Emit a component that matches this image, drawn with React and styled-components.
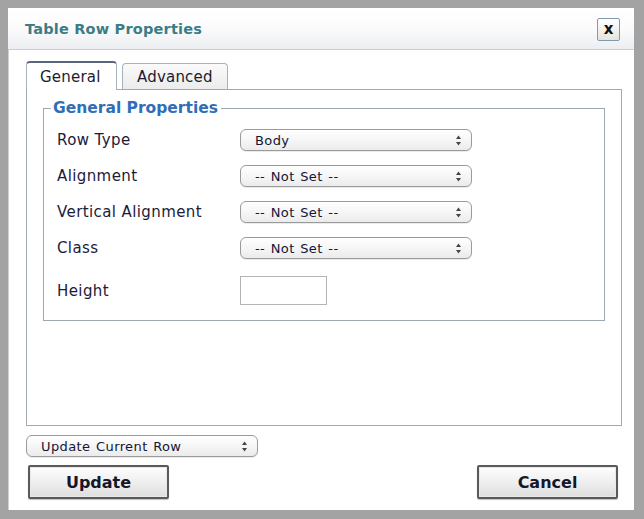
import React from 'react';
import styled, { createGlobalStyle } from 'styled-components';

const GlobalStyle = createGlobalStyle`
  html, body {
    margin: 0;
    padding: 0;
    background: #ffffff;
  }
  body {
    font-family: "DejaVu Sans", "Liberation Sans", sans-serif;
  }
`;

const Dialog = styled.div`
  width: 644px;
  height: 519px;
  box-sizing: border-box;
  border-style: solid;
  border-color: #a3a3a3;
  border-width: 8px 10px 9px 8px;
  background: #ffffff;
  display: flex;
  flex-direction: column;
  box-shadow: inset 1px 1px 0 #d0d0d0;
`;

const TitleBar = styled.div`
  height: 41px;
  flex: none;
  display: flex;
  align-items: center;
  justify-content: space-between;
  padding: 0 14px 0 17px;
  background: linear-gradient(#ffffff 0%, #fbfbfc 50%, #eceef1 100%);
  border-bottom: 1px solid #c9cdd1;
`;

const Title = styled.h1`
  margin: 0;
  font-size: 14.5px;
  font-weight: bold;
  color: #3b7d84;
  letter-spacing: 0.2px;
`;

const CloseButton = styled.button`
  width: 23px;
  height: 23px;
  margin-top: 2px;
  padding: 0;
  border: 1px solid #7f9ab4;
  border-radius: 2px;
  background: linear-gradient(#ffffff, #e8e4dc);
  display: flex;
  align-items: center;
  justify-content: center;
  font-family: "DejaVu Sans", sans-serif;
  font-weight: bold;
  font-size: 15px;
  line-height: 1;
  color: #111;
`;

const Body = styled.div`
  flex: 1;
  display: flex;
  flex-direction: column;
  padding: 10px 12px 0 18px;
`;

const Tabs = styled.div`
  display: flex;
  align-items: flex-end;
  gap: 5px;
  height: 29px;
  position: relative;
  z-index: 1;
`;

const Tab = styled.div`
  box-sizing: border-box;
  height: ${p => (p.$active ? '29px' : '26px')};
  width: ${p => p.$width}px;
  padding: 0 0 0 ${p => (p.$active ? 13 : 14)}px;
  display: flex;
  align-items: center;
  font-size: 15px;
  letter-spacing: 0.2px;
  color: #1c1c2e;
  border: 1px solid #a6b3bd;
  border-bottom: none;
  border-radius: 4px 4px 0 0;
  background: ${p => (p.$active ? '#ffffff' : 'linear-gradient(#fafafa, #ececec)')};
  border-top: ${p => (p.$active ? '2px solid #56687a' : '1px solid #a6b3bd')};
  margin-bottom: ${p => (p.$active ? '-1px' : '0')};
`;

const Panel = styled.div`
  box-sizing: border-box;
  height: 337px;
  border: 1px solid #9ea9b2;
  padding: 9px 16px 0 16px;
`;

const FieldSet = styled.fieldset`
  margin: 0;
  padding: 5px 13px 16px 13px;
  border: 1px solid #9ca9b1;
  height: 222px;
  box-sizing: border-box;
`;

const Legend = styled.legend`
  padding: 0 3px 0 2px;
  margin-left: -6px;
  font-size: 15.5px;
  font-weight: bold;
  color: #2f6fb8;
`;

const Rows = styled.div`
  display: grid;
  grid-template-columns: 183px auto;
  grid-template-rows: repeat(4, 36px) 39px;
  align-items: center;
`;

const Label = styled.div`
  font-size: 15px;
  letter-spacing: 0.4px;
  color: #1b1b3a;
  align-self: ${p => (p.$tall ? 'end' : 'center')};
  padding-bottom: ${p => (p.$tall ? '5px' : '0')};
`;

const Select = styled.div`
  box-sizing: border-box;
  width: ${p => p.$width}px;
  height: 22px;
  border: 1px solid #9a9a9a;
  border-radius: 6px;
  background: linear-gradient(#ffffff 0%, #f6f6f6 50%, #ebebeb 100%);
  box-shadow: 0 1px 0 rgba(0, 0, 0, 0.08);
  display: flex;
  align-items: center;
  justify-content: space-between;
  padding: 0 9px 0 ${p => p.$pad}px;
  font-size: 13px;
  letter-spacing: 0.4px;
  word-spacing: 1px;
  color: #151535;
`;

const Arrows = styled.svg`
  width: 7px;
  height: 11px;
  flex: none;
`;

const TextBox = styled.div`
  box-sizing: border-box;
  width: 87px;
  height: 29px;
  border: 1px solid #b4b4b4;
  background: #fff;
  align-self: end;
`;

const Footer = styled.div`
  display: flex;
  flex-direction: column;
  gap: 8px;
  padding-top: 9px;
`;

const ButtonRow = styled.div`
  display: flex;
  justify-content: space-between;
  padding: 0 4px 0 2px;
`;

const Button = styled.button`
  width: 141px;
  height: 34px;
  border: 2px solid #5a5a5a;
  border-radius: 2px;
  background: linear-gradient(#fdfdfd 0%, #efefef 50%, #dedede 100%);
  box-shadow: inset 0 0 0 1px #e8e8e8, 0 1px 1px rgba(0, 0, 0, 0.25);
  font-family: "DejaVu Sans", sans-serif;
  font-weight: bold;
  font-size: 16px;
  color: #16162a;
  padding: 0;
`;

const UpDown = () => (
  <Arrows viewBox="0 0 7 11">
    <path d="M3.5 0.5 L6 4 L1 4 Z" fill="#444" />
    <path d="M3.5 10.5 L6 7 L1 7 Z" fill="#444" />
  </Arrows>
);

const rows = [
  { label: 'Row Type', value: 'Body' },
  { label: 'Alignment', value: '-- Not Set --' },
  { label: 'Vertical Alignment', value: '-- Not Set --' },
  { label: 'Class', value: '-- Not Set --' },
];

function App() {
  return (
    <>
      <GlobalStyle />
      <Dialog>
        <TitleBar>
          <Title>Table Row Properties</Title>
          <CloseButton>x</CloseButton>
        </TitleBar>
        <Body>
          <Tabs>
            <Tab $active $width={91}>General</Tab>
            <Tab $width={106}>Advanced</Tab>
          </Tabs>
          <Panel>
            <FieldSet>
              <Legend>General Properties</Legend>
              <Rows>
                {rows.map(r => (
                  <React.Fragment key={r.label}>
                    <Label>{r.label}</Label>
                    <Select $width={232} $pad={14}>
                      <span>{r.value}</span>
                      <UpDown />
                    </Select>
                  </React.Fragment>
                ))}
                <Label $tall>Height</Label>
                <TextBox />
              </Rows>
            </FieldSet>
          </Panel>
          <Footer>
            <Select $width={232} $pad={14}>
              <span>Update Current Row</span>
              <UpDown />
            </Select>
            <ButtonRow>
              <Button>Update</Button>
              <Button>Cancel</Button>
            </ButtonRow>
          </Footer>
        </Body>
      </Dialog>
    </>
  );
}

export default App;
